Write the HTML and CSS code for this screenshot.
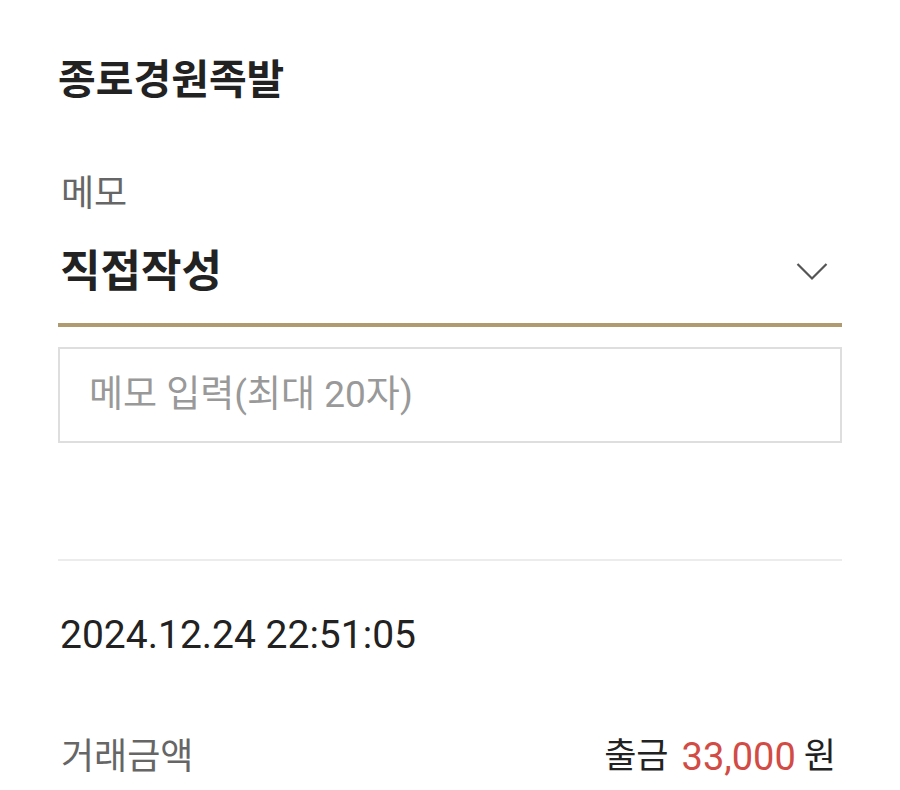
FILE: index.html
```html
<!DOCTYPE html>
<html lang="ko">
<head>
<meta charset="utf-8">
<title>메모</title>
<link rel="stylesheet" href="styles.css">
</head>
<body>
<div class="page">
  <h1 class="title">종로경원족발</h1>
  <div class="label">메모</div>
  <div class="select">
    <span class="select-value">직접작성</span>
    <svg class="chevron" width="32" height="20" viewBox="0 0 32 20" aria-hidden="true">
      <polyline points="1.5,2 16,16.5 30.5,2" fill="none" stroke="#555" stroke-width="2.2"/>
    </svg>
  </div>
  <div class="memo-input">
    <span class="placeholder">메모 입력(최대 20자)</span>
  </div>
  <div class="divider"></div>
  <div class="datetime">2024.12.24 22:51:05</div>
  <div class="amount-row">
    <span class="amount-label">거래금액</span>
    <span class="amount-value"><span class="kind">출금</span><span class="num">33,000</span><span class="unit">원</span></span>
  </div>
</div>
</body>
</html>
```

FILE: styles.css
```css
html, body {
  margin: 0;
  padding: 0;
  background: #ffffff;
}
body {
  font-family: "Roboto", "Noto Sans CJK KR", sans-serif;
  color: #222;
}
.page {
  padding: 55px 58px 0 58px;
}
.title {
  margin: 0;
  font-size: 41px;
  font-weight: 700;
  line-height: 50px;
  color: #222;
}
.label {
  margin-top: 69px;
  font-size: 36px;
  line-height: 40px;
  color: #666;
  padding-left: 3px;
}
.select {
  margin-top: 12px;
  height: 92px;
  padding-bottom: 5px;
  border-bottom: 4px solid #b09a6f;
  display: flex;
  align-items: center;
  justify-content: space-between;
}
.select-value {
  font-size: 44px;
  font-weight: 700;
  color: #222;
  padding-left: 2px;
  line-height: 50px;
}
.chevron {
  margin-right: 14px;
}
.memo-input {
  margin-top: 20px;
  height: 92px;
  border: 2px solid #dedede;
  display: flex;
  align-items: center;
  padding-left: 29px;
}
.placeholder {
  font-size: 37px;
  line-height: 44px;
  color: #999;
}
.divider {
  margin-top: 116px;
  height: 2px;
  background: #ececec;
}
.datetime {
  margin-top: 49px;
  font-size: 39px;
  line-height: 50px;
  color: #222;
  padding-left: 2px;
}
.amount-row {
  margin-top: 75px;
  display: flex;
  justify-content: space-between;
  align-items: center;
  line-height: 44px;
}
.amount-label {
  font-size: 36px;
  color: #666;
  padding-left: 3px;
}
.amount-value {
  color: #222;
  display: flex;
  align-items: center;
  padding-right: 6px;
}
.kind {
  font-size: 35px;
}
.num {
  color: #d24b45;
  margin-left: 13px;
  margin-right: 8px;
  font-size: 38px;
}
.unit {
  font-size: 35px;
}
```
